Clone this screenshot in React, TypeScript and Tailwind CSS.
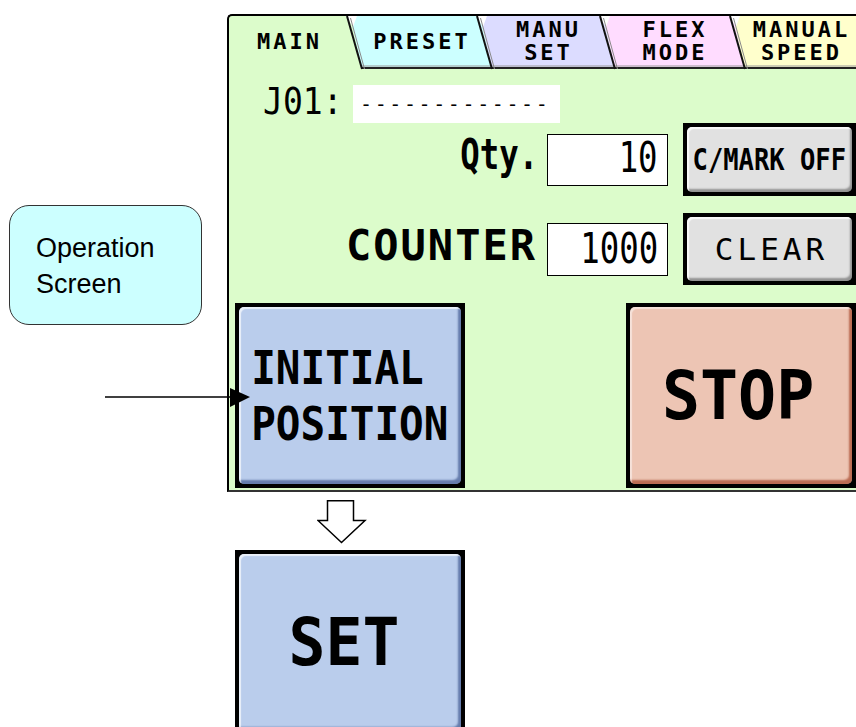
import React from 'react'

const mono = "font-['DejaVu_Sans_Mono',monospace]"

const TAB_H = 53
const SLANT = 12

type TabProps = {
  w: number
  widthClass: string
  fill?: string
  first?: boolean
  lines: string[]
}

function Tab({ w, widthClass, fill, first, lines }: TabProps) {
  return (
    <div className={`relative h-full shrink-0 ${widthClass}`}>
      {!first && (
        <svg className="absolute left-0 top-0 overflow-visible" width={w} height={TAB_H}>
          <polygon points={`0,0 ${w},0 ${w + SLANT},${TAB_H} ${SLANT},${TAB_H}`} fill={fill} />
          <line x1={SLANT} y1={TAB_H - 3} x2={w + SLANT} y2={TAB_H - 3} stroke="#9a9a9a" strokeWidth={1} />
          <line x1={SLANT} y1={TAB_H - 1} x2={w + SLANT} y2={TAB_H - 1} stroke="#222" strokeWidth={2} />
          <polygon points="-4,0 7,0 3,11" fill="#fff" />
          <line x1={-3} y1={0} x2={SLANT} y2={TAB_H} stroke="#111" strokeWidth={2} />
          <line x1={0.5} y1={2} x2={SLANT + 2.5} y2={TAB_H} stroke="#8a8a8a" strokeWidth={1} />
        </svg>
      )}
      <div
        className={`relative flex h-full flex-col items-center justify-center pb-[3px] text-[22px] font-bold leading-[23px] tracking-[3px] text-black ${mono} ${first ? '' : 'pl-[14px]'}`}
      >
        {lines.map((l) => (
          <span key={l}>{l}</span>
        ))}
      </div>
    </div>
  )
}

function Key({ frame, face, children }: { frame: string; face: string; children: React.ReactNode }) {
  return (
    <div className={`shrink-0 bg-black p-[4px] ${frame}`}>
      <div className={`flex h-full w-full items-center justify-center overflow-hidden whitespace-nowrap rounded-[5px] ${face}`}>
        {children}
      </div>
    </div>
  )
}

const blueFace =
  'bg-[#bacdec] shadow-[inset_2px_2px_1px_rgba(255,255,255,0.7),inset_-3px_-4px_2px_rgba(45,70,130,0.6)]'
const redFace =
  'bg-[#edc5b4] shadow-[inset_2px_2px_1px_rgba(255,255,255,0.5),inset_-3px_-4px_2px_rgba(160,60,30,0.65)]'
const grayFace =
  'bg-[#e1e1e1] shadow-[inset_2px_2px_1px_rgba(255,255,255,0.8),inset_-2px_-3px_2px_rgba(0,0,0,0.35)]'

function Panel() {
  return (
    <div className="h-[478px] w-[629px] shrink-0 overflow-hidden rounded-tl-[5px] border-l-2 border-t-2 border-b-2 border-l-black border-t-black border-b-[#333] bg-[#dcfccb]">
      {/* tabs */}
      <div className="flex h-[53px]">
        <Tab first w={121} widthClass="w-[121px]" lines={['MAIN']} />
        <Tab w={130} widthClass="w-[130px]" fill="#ccffff" lines={['PRESET']} />
        <Tab w={123} widthClass="w-[123px]" fill="#dcdcff" lines={['MANU', 'SET']} />
        <Tab w={130} widthClass="w-[130px]" fill="#ffdcff" lines={['FLEX', 'MODE']} />
        <Tab w={123} widthClass="w-[123px]" fill="#ffffcc" lines={['MANUAL', 'SPEED']} />
      </div>

      {/* job row */}
      <div className="ml-[34px] mt-[16px] flex h-[38px] items-center">
        <div className={`w-[90px] shrink-0 whitespace-nowrap pb-[6px] text-[38px] leading-none text-black ${mono}`}>
          <span className="inline-block origin-left [transform:scaleX(0.87)]">J01:</span>
        </div>
        <div className="flex h-[38px] w-[207px] items-center bg-white pl-[7px]">
          <span className={`text-[20px] leading-none tracking-[2.6px] text-black ${mono}`}>-------------</span>
        </div>
      </div>

      {/* qty row */}
      <div className="flex h-[73px] items-center justify-end">
        <div className={`mr-[9px] whitespace-nowrap pb-[10px] text-[42px] font-bold leading-none text-black ${mono}`}>
          <span className="inline-block origin-right [transform:scaleX(0.77)]">Qty.</span>
        </div>
        <div className="flex h-[52px] w-[121px] shrink-0 items-center justify-end border border-black bg-white pr-[9px]">
          <span className={`inline-block origin-right pb-[4px] text-[42px] leading-none text-black [transform:scaleX(0.77)] ${mono}`}>
            10
          </span>
        </div>
        <div className="ml-[15px]">
          <Key frame="w-[173px] h-[73px]" face={grayFace}>
            <span className={`inline-block text-[30px] font-bold leading-none text-black [transform:scaleX(0.85)] ${mono}`}>
              C/MARK OFF
            </span>
          </Key>
        </div>
      </div>

      {/* counter row */}
      <div className="mt-[17px] flex h-[72px] items-center justify-end">
        <div className={`mr-[10px] whitespace-nowrap pb-[6px] text-[42px] font-bold leading-none tracking-[2px] text-black ${mono}`}>
          COUNTER
        </div>
        <div className="flex h-[53px] w-[121px] shrink-0 items-center justify-end border border-black bg-white pr-[9px]">
          <span className={`inline-block origin-right text-[42px] leading-none text-black [transform:scaleX(0.77)] ${mono}`}>
            1000
          </span>
        </div>
        <div className="ml-[15px]">
          <Key frame="w-[173px] h-[72px]" face={grayFace}>
            <span className={`pl-[4px] text-[31px] leading-none tracking-[4px] text-black ${mono}`}>CLEAR</span>
          </Key>
        </div>
      </div>

      {/* big buttons */}
      <div className="mt-[18px] flex h-[185px] justify-between pl-[6px]">
        <Key frame="w-[230px] h-[185px]" face={blueFace}>
          <div className={`inline-block text-left text-[46px] font-bold leading-[56px] text-black [transform:scaleX(0.89)] ${mono}`}>
            <div>INITIAL</div>
            <div>POSITION</div>
          </div>
        </Key>
        <Key frame="w-[230px] h-[185px]" face={redFace}>
          <span className={`inline-block pr-[6px] text-[68px] font-bold leading-none text-black [transform:scaleX(0.93)] ${mono}`}>
            STOP
          </span>
        </Key>
      </div>
    </div>
  )
}

function Callout() {
  return (
    <div className="h-[120px] w-[193px] rounded-[20px] border border-[#333] bg-[#ccffff] pl-[26px] pt-[24px] font-['Liberation_Sans',Arial,sans-serif] text-[27px] leading-[36px] text-black">
      <div>Operation</div>
      <div>Screen</div>
    </div>
  )
}

export default function App() {
  return (
    <div className="relative h-[727px] w-[856px] overflow-hidden bg-white">
      <div className="flex pt-[14px]">
        <div className="w-[227px] shrink-0 pl-[9px] pt-[191px]">
          <Callout />
        </div>
        <Panel />
      </div>

      {/* down arrow */}
      <div className="ml-[317px] mt-[8px]">
        <svg width="50" height="44" viewBox="0 0 50 44">
          <path d="M10.5 0.75H36.5V20.5H48L24.5 42.5L1 20.5H10.5Z" fill="#fff" stroke="#000" strokeWidth="1.5" />
        </svg>
      </div>

      <div className="ml-[235px] mt-[6px]">
        <Key frame="w-[230px] h-[185px]" face={blueFace}>
          <span className={`inline-block pr-[12px] text-[66px] font-bold leading-none text-black [transform:scaleX(0.93)] ${mono}`}>
            SET
          </span>
        </Key>
      </div>

      {/* pointer arrow */}
      <svg className="absolute left-[100px] top-[380px]" width="155" height="30" viewBox="0 0 155 30">
        <line x1="5" y1="17" x2="132" y2="17" stroke="#000" strokeWidth="1.5" />
        <polygon points="130,8 150,17 130,27" fill="#000" />
      </svg>
    </div>
  )
}
